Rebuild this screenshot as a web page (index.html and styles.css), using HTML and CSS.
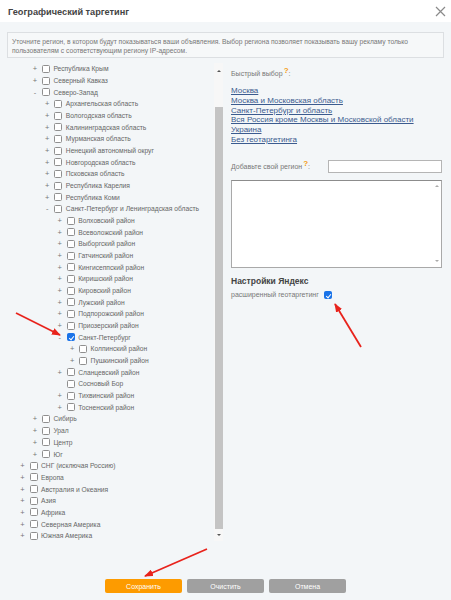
FILE: index.html
```html
<!DOCTYPE html>
<html lang="ru">
<head>
<meta charset="utf-8">
<title>Географический таргетинг</title>
<link rel="stylesheet" href="styles.css">
</head>
<body>
<div class="dialog">
  <header class="head">
    <h1 class="title">Географический таргетинг</h1>
    <button class="close" aria-label="Закрыть">
      <svg width="11" height="11" viewBox="0 0 11 11"><path d="M1 1L10 10M10 1L1 10" stroke="#8a8a8a" stroke-width="1.2" fill="none"/></svg>
    </button>
  </header>

  <p class="info">Уточните регион, в котором будут показываться ваши объявления. Выбор региона позволяет показывать вашу рекламу только пользователям с соответствующим региону IP-адресом.</p>

  <div class="main">
    <div class="tree-pane">
      <ul class="tree">
        <li class="l1"><span class="tg">+</span><span class="cb"></span><span class="tx">Республика Крым</span></li>
        <li class="l1"><span class="tg">+</span><span class="cb"></span><span class="tx">Северный Кавказ</span></li>
        <li class="l1"><span class="tg">-</span><span class="cb"></span><span class="tx">Северо-Запад</span></li>
        <li class="l2"><span class="tg">+</span><span class="cb"></span><span class="tx">Архангельская область</span></li>
        <li class="l2"><span class="tg">+</span><span class="cb"></span><span class="tx">Вологодская область</span></li>
        <li class="l2"><span class="tg">+</span><span class="cb"></span><span class="tx">Калининградская область</span></li>
        <li class="l2"><span class="tg">+</span><span class="cb"></span><span class="tx">Мурманская область</span></li>
        <li class="l2"><span class="tg">+</span><span class="cb"></span><span class="tx">Ненецкий автономный округ</span></li>
        <li class="l2"><span class="tg">+</span><span class="cb"></span><span class="tx">Новгородская область</span></li>
        <li class="l2"><span class="tg">+</span><span class="cb"></span><span class="tx">Псковская область</span></li>
        <li class="l2"><span class="tg">+</span><span class="cb"></span><span class="tx">Республика Карелия</span></li>
        <li class="l2"><span class="tg">+</span><span class="cb"></span><span class="tx">Республика Коми</span></li>
        <li class="l2"><span class="tg">-</span><span class="cb"></span><span class="tx">Санкт-Петербург и Ленинградская область</span></li>
        <li class="l3"><span class="tg">+</span><span class="cb"></span><span class="tx">Волховский район</span></li>
        <li class="l3"><span class="tg">+</span><span class="cb"></span><span class="tx">Всеволожский район</span></li>
        <li class="l3"><span class="tg">+</span><span class="cb"></span><span class="tx">Выборгский район</span></li>
        <li class="l3"><span class="tg">+</span><span class="cb"></span><span class="tx">Гатчинский район</span></li>
        <li class="l3"><span class="tg">+</span><span class="cb"></span><span class="tx">Кингисеппский район</span></li>
        <li class="l3"><span class="tg">+</span><span class="cb"></span><span class="tx">Киришский район</span></li>
        <li class="l3"><span class="tg">+</span><span class="cb"></span><span class="tx">Кировский район</span></li>
        <li class="l3"><span class="tg">+</span><span class="cb"></span><span class="tx">Лужский район</span></li>
        <li class="l3"><span class="tg">+</span><span class="cb"></span><span class="tx">Подпорожский район</span></li>
        <li class="l3"><span class="tg">+</span><span class="cb"></span><span class="tx">Приозерский район</span></li>
        <li class="l3"><span class="tg">-</span><span class="cb on"></span><span class="tx">Санкт-Петербург</span></li>
        <li class="l4"><span class="tg">+</span><span class="cb"></span><span class="tx">Колпинский район</span></li>
        <li class="l4"><span class="tg">+</span><span class="cb"></span><span class="tx">Пушкинский район</span></li>
        <li class="l3"><span class="tg">+</span><span class="cb"></span><span class="tx">Сланцевский район</span></li>
        <li class="l3"><span class="tg"></span><span class="cb"></span><span class="tx">Сосновый Бор</span></li>
        <li class="l3"><span class="tg">+</span><span class="cb"></span><span class="tx">Тихвинский район</span></li>
        <li class="l3"><span class="tg">+</span><span class="cb"></span><span class="tx">Тосненский район</span></li>
        <li class="l1"><span class="tg">+</span><span class="cb"></span><span class="tx">Сибирь</span></li>
        <li class="l1"><span class="tg">+</span><span class="cb"></span><span class="tx">Урал</span></li>
        <li class="l1"><span class="tg">+</span><span class="cb"></span><span class="tx">Центр</span></li>
        <li class="l1"><span class="tg">+</span><span class="cb"></span><span class="tx">Юг</span></li>
        <li class="l0"><span class="tg">+</span><span class="cb"></span><span class="tx">СНГ (исключая Россию)</span></li>
        <li class="l0"><span class="tg">+</span><span class="cb"></span><span class="tx">Европа</span></li>
        <li class="l0"><span class="tg">+</span><span class="cb"></span><span class="tx">Австралия и Океания</span></li>
        <li class="l0"><span class="tg">+</span><span class="cb"></span><span class="tx">Азия</span></li>
        <li class="l0"><span class="tg">+</span><span class="cb"></span><span class="tx">Африка</span></li>
        <li class="l0"><span class="tg">+</span><span class="cb"></span><span class="tx">Северная Америка</span></li>
        <li class="l0"><span class="tg">+</span><span class="cb"></span><span class="tx">Южная Америка</span></li>
      </ul>
      <div class="vscroll">
        <span class="sb-btn"><i class="tri up"></i></span>
        <span class="sb-track"></span>
        <span class="sb-thumb"></span>
        <span class="sb-btn"><i class="tri down"></i></span>
      </div>
    </div>

    <div class="side">
      <div class="label">Быстрый выбор<sup class="hint">?</sup>:</div>
      <nav class="links">
        <a href="#">Москва</a>
        <a href="#">Москва и Московская область</a>
        <a href="#">Санкт-Петербург и область</a>
        <a href="#">Вся Россия кроме Москвы и Московской области</a>
        <a href="#">Украина</a>
        <a href="#">Без геотаргетинга</a>
      </nav>
      <div class="add-row">
        <span class="label">Добавьте свой регион<sup class="hint">?</sup>:</span>
        <span class="input"></span>
      </div>
      <div class="region-list">
        <span class="mini-scroll"><i class="tri up"></i><i class="tri down"></i></span>
      </div>
      <h2 class="ya-title">Настройки Яндекс</h2>
      <div class="ext-row">
        <span class="label">расширенный геотаргетинг</span>
        <span class="cb on"></span>
      </div>
    </div>
  </div>

  <div class="actions">
    <button class="btn save">Сохранить</button>
    <button class="btn gray">Очистить</button>
    <button class="btn gray">Отмена</button>
  </div>

  <svg class="annot" width="451" height="600" viewBox="0 0 451 600">
    <defs>
      <marker id="ah" markerWidth="9" markerHeight="7" refX="8" refY="3.5" orient="auto" markerUnits="userSpaceOnUse">
        <path d="M0 0L9 3.5L0 7Z" fill="#e8231c"/>
      </marker>
    </defs>
    <path d="M16 313L60 335" stroke="#e8231c" stroke-width="1.8" fill="none" marker-end="url(#ah)"/>
    <path d="M361 347L335 304" stroke="#e8231c" stroke-width="1.8" fill="none" marker-end="url(#ah)"/>
    <path d="M207 549L145 576" stroke="#e8231c" stroke-width="1.8" fill="none" marker-end="url(#ah)"/>
  </svg>
</div>
</body>
</html>
```

FILE: styles.css
```css
* { box-sizing: border-box; margin: 0; padding: 0; }

html, body { width: 451px; height: 600px; }

body {
  background: #f3f6f8;
  font-family: "Liberation Sans", Arial, sans-serif;
  color: #666;
  overflow: hidden;
}

.dialog {
  position: relative;
  width: 451px;
  height: 600px;
}

.head {
  height: 22px;
  background: #fff;
  display: flex;
  align-items: center;
  justify-content: space-between;
  padding: 0 5px 0 8px;
}

.title {
  font-size: 9.2px;
  font-weight: bold;
  color: #444;
  padding-top: 1px;
}

.close {
  border: 0;
  background: none;
  width: 11px;
  height: 11px;
  display: flex;
}

.info {
  margin: 10px 7px 0;
  height: 26px;
  border: 1px solid #dcdfe2;
  background: #f6f8f9;
  padding: 4px 4px 0;
  font-size: 6.7px;
  line-height: 9px;
  color: #777;
}

.main {
  margin-top: 5px;
  height: 478px;
  display: flex;
}

.tree-pane {
  width: 223px;
  display: flex;
}

.tree {
  flex: 1;
  list-style: none;
  overflow: hidden;
  font-size: 6.7px;
  color: #666;
}

.tree li {
  height: 11.675px;
  display: flex;
  align-items: center;
  white-space: nowrap;
}

.tree .l0 { padding-left: 19px; }
.tree .l1 { padding-left: 31.4px; }
.tree .l2 { padding-left: 43.8px; }
.tree .l3 { padding-left: 56.2px; }
.tree .l4 { padding-left: 68.6px; }

.tg {
  width: 7px;
  text-align: center;
  color: #777;
  font-size: 7.5px;
}

.cb {
  width: 8px;
  height: 8px;
  border: 1px solid #8f8f8f;
  border-radius: 1.5px;
  background: #fff;
  margin-left: 3.5px;
  flex-shrink: 0;
  position: relative;
}

.cb.on {
  background: #1a73e8;
  border-color: #1a73e8;
}

.cb.on::after {
  content: "";
  position: absolute;
  left: 2.2px;
  top: 0.3px;
  width: 2px;
  height: 4.2px;
  border-right: 1.2px solid #fff;
  border-bottom: 1.2px solid #fff;
  transform: rotate(40deg);
}

.tx { margin-left: 3.5px; }

.vscroll {
  width: 9px;
  display: flex;
  flex-direction: column;
  background: #f7f7f7;
}

.sb-btn {
  height: 16px;
  display: flex;
  align-items: center;
  justify-content: center;
}

.sb-btn:last-child { height: 12px; }

.sb-track { height: 28px; }

.sb-thumb {
  flex: 1;
  margin: 0 0.5px 0 1px;
  background: #c4c4c4;
}

.tri {
  width: 0;
  height: 0;
  border-left: 2.5px solid transparent;
  border-right: 2.5px solid transparent;
}

.tri.up { border-bottom: 2.5px solid #555; }
.tri.down { border-top: 2.5px solid #555; }

.side {
  margin-left: 8px;
  width: 211px;
  padding-top: 6px;
  font-size: 7px;
  color: #777;
}

.label { line-height: 10px; }

.hint {
  color: #f39c12;
  font-weight: bold;
  font-size: 8px;
  line-height: 0;
  vertical-align: 3px;
  margin-left: 1px;
}

.links {
  margin-top: 7px;
  display: flex;
  flex-direction: column;
}

.links a {
  font-size: 8px;
  line-height: 9.8px;
  color: #3b5b8f;
  text-decoration: underline;
}

.add-row {
  margin-top: 15.5px;
  height: 13px;
  display: flex;
  align-items: center;
  justify-content: space-between;
}

.input {
  width: 114px;
  height: 13px;
  background: #fff;
  border: 1px solid #b5b5b5;
}

.region-list {
  margin-top: 7px;
  height: 88px;
  background: #fff;
  border: 1px solid #a9a9a9;
  border-top-color: #8c8c8c;
  display: flex;
  justify-content: flex-end;
}

.mini-scroll {
  width: 9px;
  display: flex;
  flex-direction: column;
  justify-content: space-between;
  align-items: center;
  padding: 4px 0 5px;
}

.mini-scroll .tri.up { border-bottom-color: #aaa; }
.mini-scroll .tri.down { border-top-color: #aaa; }

.ya-title {
  margin-top: 7px;
  font-size: 8.5px;
  line-height: 12px;
  font-weight: bold;
  color: #444;
}

.ext-row {
  margin-top: 3px;
  height: 10px;
  display: flex;
  align-items: center;
}

.ext-row .cb { margin-left: 5px; }

.actions {
  margin-top: 38px;
  display: flex;
  justify-content: center;
  gap: 5px;
}

.btn {
  width: 77px;
  height: 14px;
  border: 0;
  border-radius: 2px;
  font-family: "Liberation Sans", Arial, sans-serif;
  font-size: 7px;
  color: #fff;
}

.btn.save { background: #fd9b00; }
.btn.gray { background: #a0a0a0; }

.annot {
  position: absolute;
  top: 0;
  left: 0;
  pointer-events: none;
}
```
